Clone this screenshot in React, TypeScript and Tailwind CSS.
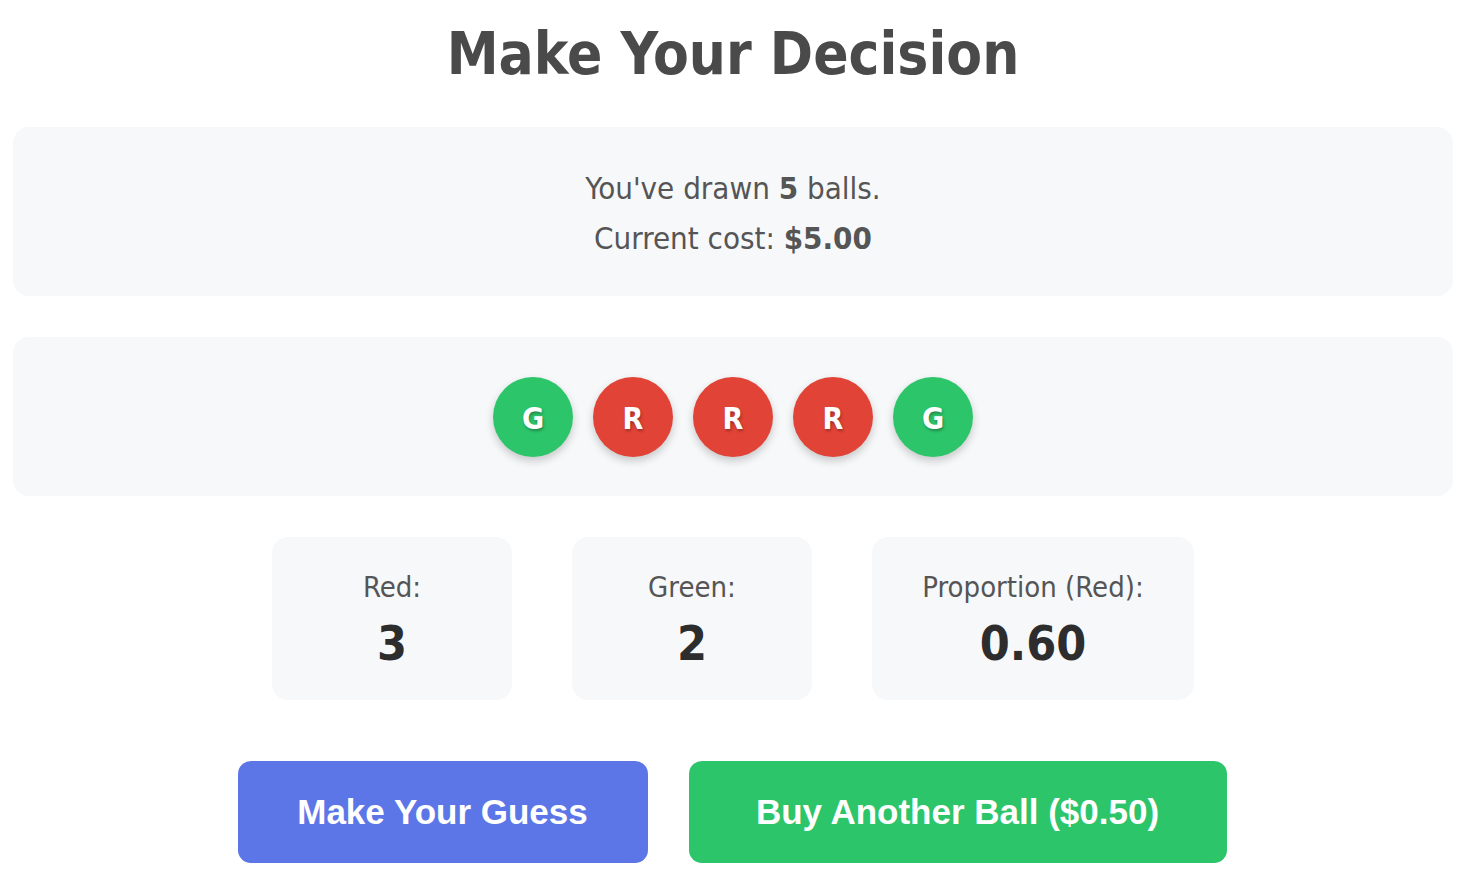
import React from 'react';

const tahoma = { fontFamily: '"DejaVu Sans Condensed", "DejaVu Sans", sans-serif' };

export default function App() {
  const balls = ['G', 'R', 'R', 'R', 'G'];
  const stats = [
    { label: 'Red:', value: '3', w: 'w-[240px]' },
    { label: 'Green:', value: '2', w: 'w-[240px]' },
    { label: 'Proportion (Red):', value: '0.60', w: 'w-[322px]' }
  ];

  return (
    <div className="w-[1466px] bg-white px-[13px] pt-[20px] pb-[22px]" style={tahoma}>
      <h1 className="text-center text-[58px] leading-[68px] font-bold text-[#4a4a4a]">Make Your Decision</h1>

      <div className="mt-[39px] h-[169px] rounded-[16px] bg-[#f7f8fa] flex flex-col items-center justify-center pt-[3px] text-[31px] leading-[50px] text-[#555]">
        <p>You've drawn <b>5</b> balls.</p>
        <p>Current cost: <b>$5.00</b></p>
      </div>

      <div className="mt-[41px] h-[159px] rounded-[16px] bg-[#f7f8fa] flex items-center justify-center gap-[20px]">
        {balls.map((b, i) => (
          <div
            key={i}
            className={`w-[80px] h-[80px] rounded-full flex items-center justify-center pt-[3px] text-white font-bold text-[30px] shadow-[0_4px_8px_rgba(0,0,0,0.2)] [text-shadow:1px_2px_3px_rgba(0,0,0,0.3)] ${
              b === 'G' ? 'bg-[#2cc56a]' : 'bg-[#e24337]'
            }`}
          >
            {b}
          </div>
        ))}
      </div>

      <div className="mt-[41px] flex justify-center gap-[60px]">
        {stats.map((s, i) => (
          <div key={i} className={`${s.w} h-[163px] rounded-[16px] bg-[#f7f8fa] flex flex-col items-center justify-center pt-[2px]`}>
            <span className="text-[29px] leading-[36px] text-[#555]">{s.label}</span>
            <span className="mt-[10px] text-[48px] leading-[56px] font-bold text-[#2d2d2d]">{s.value}</span>
          </div>
        ))}
      </div>

      <div className="mt-[61px] flex justify-center gap-[41px] pr-[2px]" style={{ fontFamily: '"Liberation Sans", Arial, sans-serif' }}>
        <button className="w-[410px] h-[102px] rounded-[13px] bg-[#5c76e8] text-white text-[35px] font-bold">Make Your Guess</button>
        <button className="w-[538px] h-[102px] rounded-[13px] bg-[#2cc56a] text-white text-[35px] font-bold">Buy Another Ball ($0.50)</button>
      </div>
    </div>
  );
}
